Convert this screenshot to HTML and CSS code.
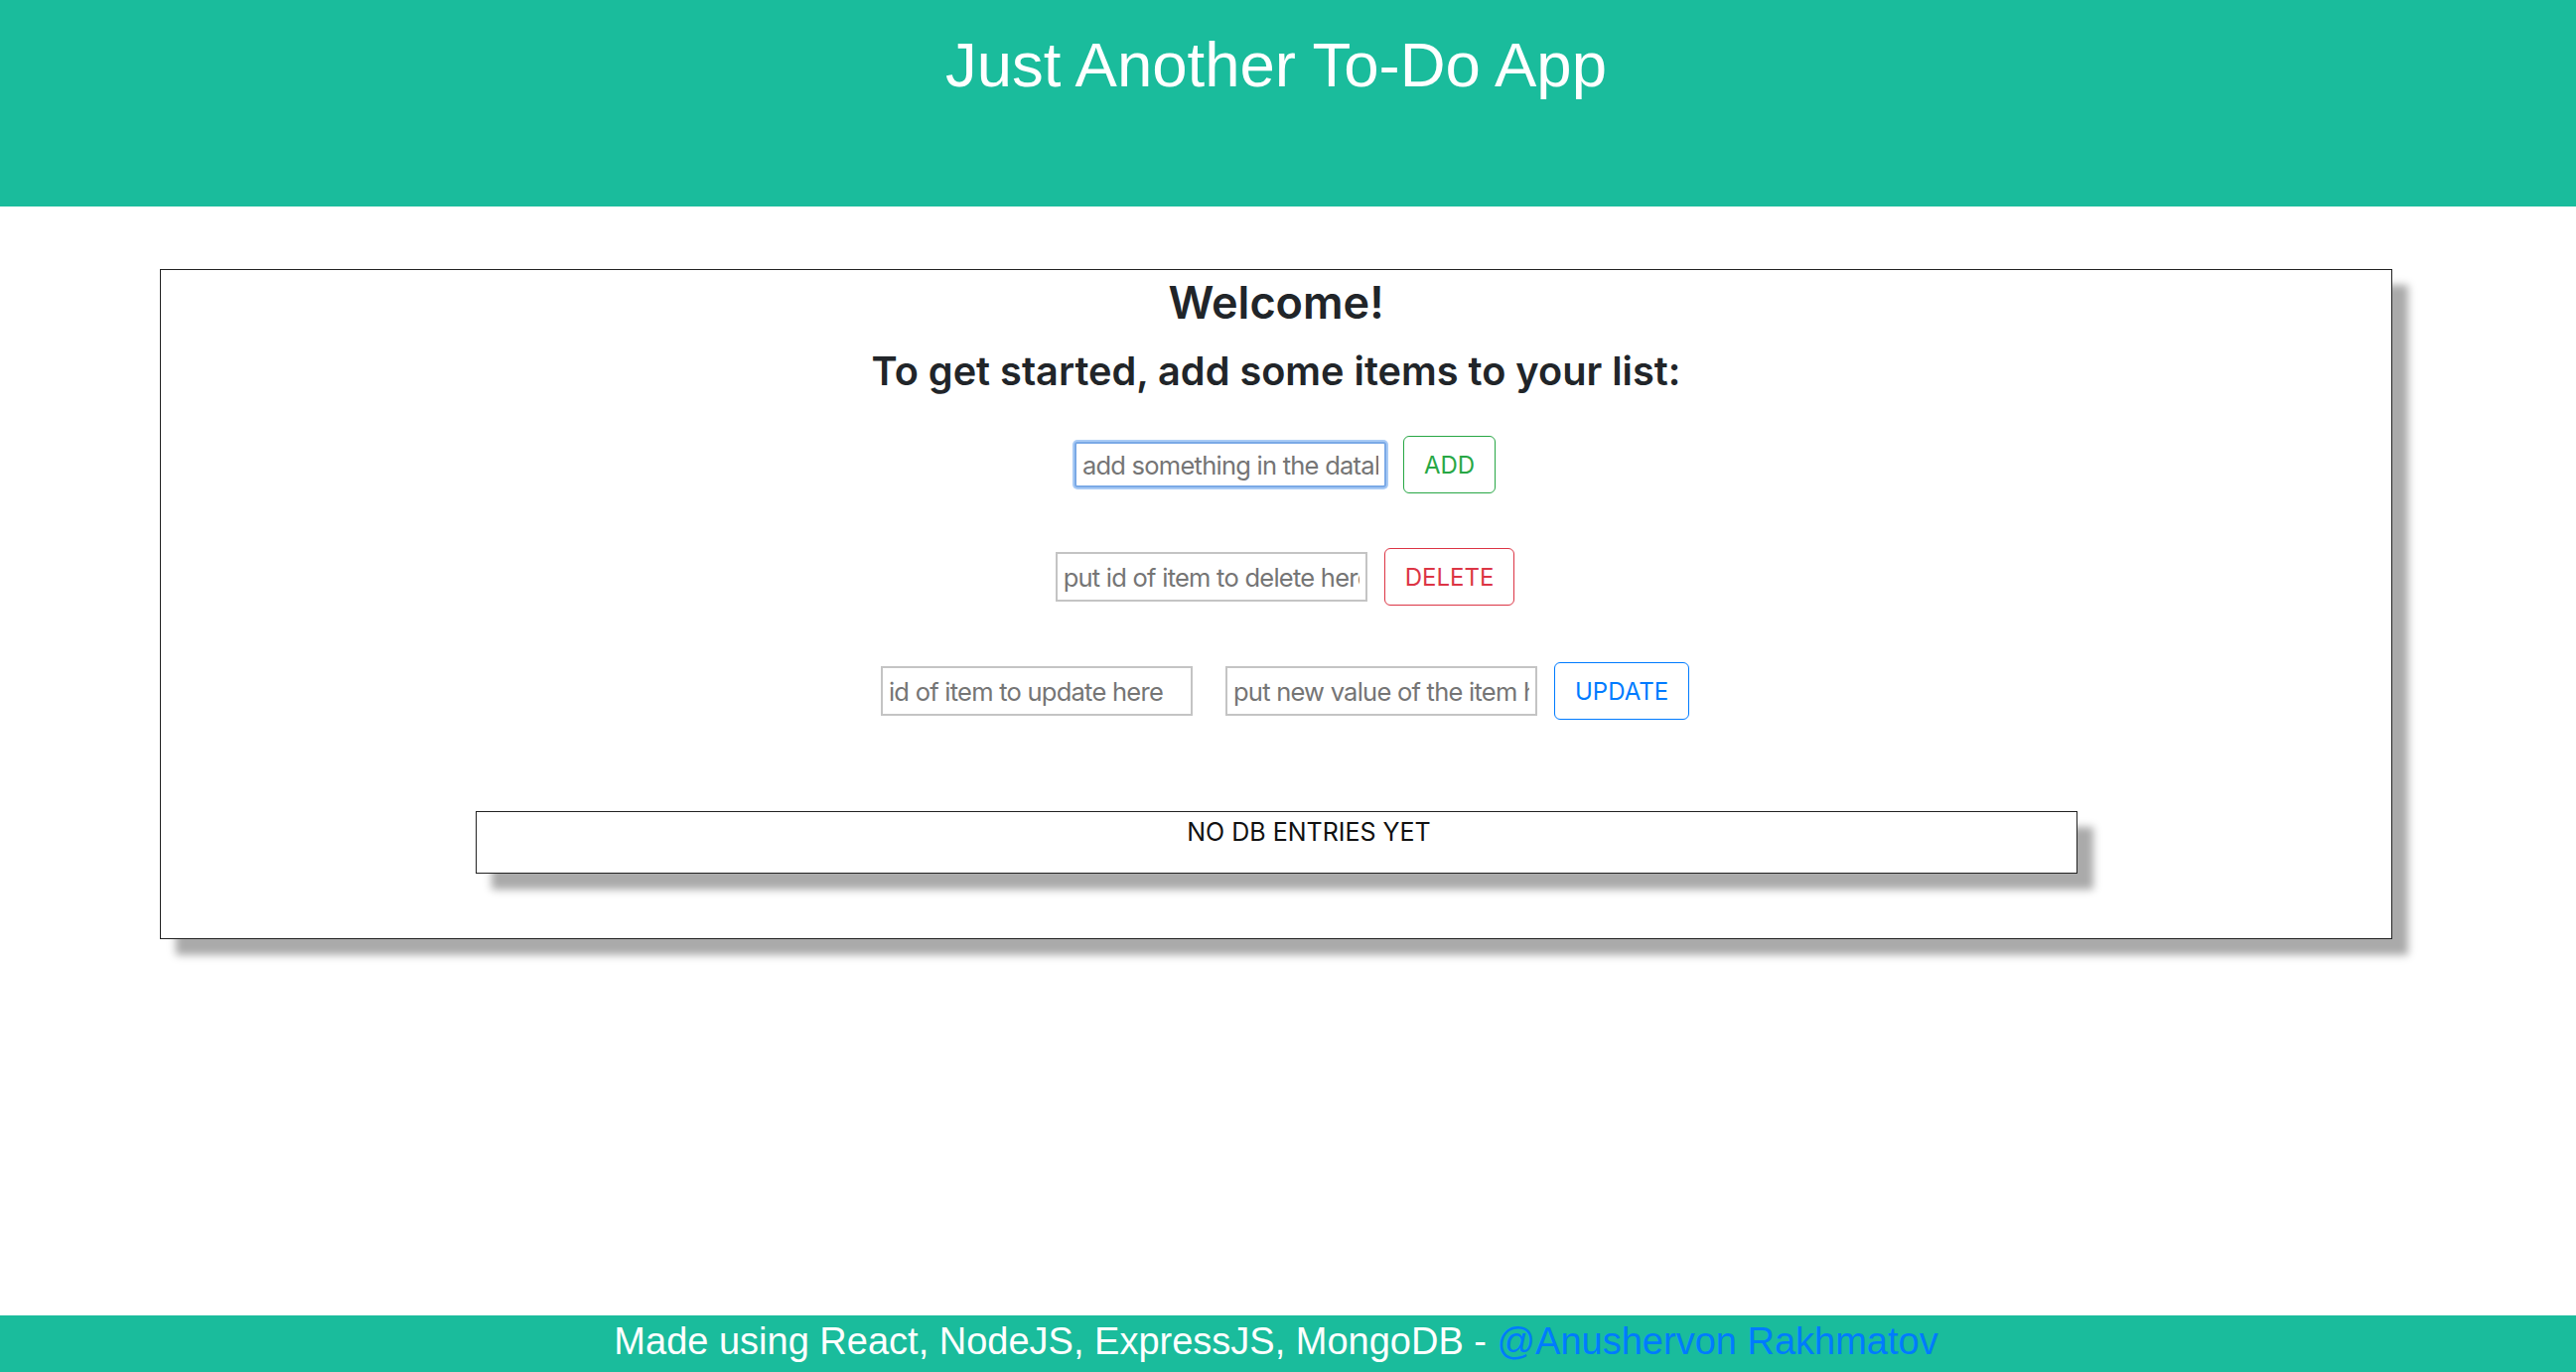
FILE: index.html
```html
<!DOCTYPE html>
<html lang="en">
<head>
<meta charset="utf-8">
<title>Just Another To-Do App</title>
<link rel="stylesheet" href="styles.css">
</head>
<body>
<div class="page">
  <header class="app-header">
    <h1 class="app-title">Just Another To-Do App</h1>
  </header>
  <main class="main">
    <section class="panel">
      <h4 class="welcome">Welcome!</h4>
      <h5 class="subtitle">To get started, add some items to your list:</h5>
      <div class="row row-add">
        <input class="field field-focus" type="text" placeholder="add something in the database">
        <button class="btn btn-add">ADD</button>
      </div>
      <div class="row row-delete">
        <input class="field" type="text" placeholder="put id of item to delete here">
        <button class="btn btn-delete">DELETE</button>
      </div>
      <div class="row row-update">
        <input class="field" type="text" placeholder="id of item to update here">
        <input class="field field-gap" type="text" placeholder="put new value of the item here">
        <button class="btn btn-update">UPDATE</button>
      </div>
      <ul class="entries">
        <li class="entry-empty">NO DB ENTRIES YET</li>
      </ul>
    </section>
  </main>
  <footer class="app-footer">
    Made using React, NodeJS, ExpressJS, MongoDB - <a class="footer-link" href="#">@Anushervon Rakhmatov</a>
  </footer>
</div>
</body>
</html>
```
FILE: styles.css
```css
* { box-sizing: border-box; }
html, body { margin: 0; padding: 0; }
body {
  font-family: "Inter", "Noto Sans", sans-serif;
  color: #212529;
  background: #fff;
}
.page {
  min-height: 100vh;
  display: flex;
  flex-direction: column;
}
.app-header {
  background: #1abc9c;
  height: 208px;
  padding: 29px 24px 0 0;
  text-align: center;
}
.app-title {
  margin: 0;
  font-family: "Liberation Sans", Arial, sans-serif;
  font-weight: 400;
  font-size: 63.5px;
  line-height: normal;
  color: #fff;
}
.main {
  flex: 1;
  padding-top: 63px;
}
.panel {
  margin-left: 161px;
  width: 2248px;
  border: 1.5px solid #222;
  box-shadow: 16px 16px 8px #aaaaaa;
  padding: 6px 0 65px;
  text-align: center;
}
.welcome {
  margin: 0;
  font-size: 45px;
  font-weight: 600;
  line-height: 54px;
}
.subtitle {
  margin: 19px 0 0;
  font-size: 39.7px;
  font-weight: 600;
  line-height: 47px;
}
.row {
  display: flex;
  justify-content: center;
  align-items: center;
  gap: 17px;
  padding-left: 18px;
  height: 58px;
}
.row-add { margin-top: 41px; }
.row-delete { margin-top: 55px; }
.row-update { margin-top: 57px; }
.field {
  width: 314px;
  height: 50px;
  border: 2px solid #c4c4c4;
  border-radius: 0;
  padding: 0 6px;
  font-family: "Inter", "Noto Sans", sans-serif;
  font-size: 25.5px;
  letter-spacing: -0.75px;
  color: #333;
  background: #fff;
  outline: none;
}
.field::placeholder { color: #757575; }
.field-focus {
  height: 46px;
  border: 2px solid #7aa9e6;
  border-radius: 3px;
  box-shadow: 0 0 0 2px #a9cbf5;
}
.field-gap { margin-left: 16px; }
.btn {
  height: 58px;
  padding: 2px 20px 0;
  background: #fff;
  border: 1.5px solid;
  border-radius: 6px;
  font-family: "Inter", "Noto Sans", sans-serif;
  font-size: 24px;
  line-height: 36px;
  cursor: pointer;
}
.btn-add { color: #28a745; border-color: #28a745; }
.btn-delete { color: #dc3545; border-color: #dc3545; }
.btn-update { color: #007bff; border-color: #007bff; }
.entries {
  list-style: none;
  width: 1613px;
  margin: 92px auto 0;
  padding: 1px 0 22px 66px;
  border: 1.5px solid #222;
  box-shadow: 16px 16px 8px #aaaaaa;
  text-align: center;
}
.entry-empty {
  font-size: 25px;
  line-height: 38px;
  color: #111;
}
.app-footer {
  background: #1abc9c;
  height: 57px;
  padding-right: 24px;
  text-align: center;
  font-family: "Liberation Sans", Arial, sans-serif;
  font-size: 38px;
  line-height: 52px;
  color: #fff;
  white-space: nowrap;
}
.footer-link {
  color: #007bff;
  text-decoration: none;
}
```
